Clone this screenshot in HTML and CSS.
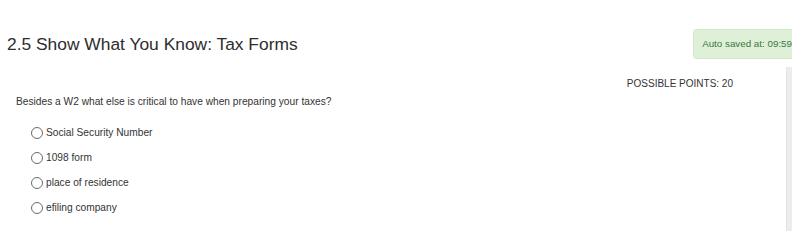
FILE: index.html
```html
<!DOCTYPE html>
<html lang="en">
<head>
  <meta charset="UTF-8">
  <title>2.5 Show What You Know: Tax Forms</title>
  <link rel="stylesheet" href="styles.css">
</head>
<body>
  <header class="quiz-header">
    <h1>2.5 Show What You Know: Tax Forms</h1>
    <div class="autosave">Auto saved at: 09:59</div>
  </header>

  <main class="quiz-body">
    <section class="question">
      <p class="points">POSSIBLE POINTS: 20</p>
      <p class="question-text">Besides a W2 what else is critical to have when preparing your taxes?</p>
      <ul class="answers">
        <li><label><span class="radio"></span>Social Security Number</label></li>
        <li><label><span class="radio"></span>1098 form</label></li>
        <li><label><span class="radio"></span>place of residence</label></li>
        <li><label><span class="radio"></span>efiling company</label></li>
      </ul>
    </section>
    <div class="side-rail"></div>
  </main>
</body>
</html>
```

FILE: styles.css
```css
/* Reset */
* {
  margin: 0;
  padding: 0;
  box-sizing: border-box;
}

html, body {
  overflow: hidden;
}

body {
  font-family: 'Liberation Sans', Arial, sans-serif;
  background: #fff;
  color: #333;
  width: 792px;
  height: 231px;
}

/* Header */
.quiz-header {
  display: flex;
  justify-content: space-between;
  align-items: flex-start;
  padding: 29px 0 0 7px;
  height: 67px;
}

.quiz-header h1 {
  font-size: 17.4px;
  font-weight: normal;
  color: #2d2d2d;
  line-height: 22px;
  margin-top: 4px;
}

.autosave {
  background: #dff0d8;
  color: #3c763d;
  border: 1px solid #d6e9c6;
  border-right: none;
  border-radius: 4px 0 0 4px;
  font-size: 9.8px;
  line-height: 12px;
  padding: 8px 0 8px 8px;
  height: 30px;
  white-space: nowrap;
}

/* Body */
.quiz-body {
  display: flex;
}

.question {
  flex: 1;
  padding-left: 16px;
}

.points {
  text-align: right;
  padding-right: 53px;
  font-size: 10px;
  line-height: 12px;
  color: #333;
  margin-top: 11px;
}

.question-text {
  font-size: 10.2px;
  line-height: 12px;
  color: #333;
  margin-top: 6px;
}

.answers {
  list-style: none;
  margin-top: 19px;
}

.answers li {
  height: 25px;
}

.answers label {
  display: flex;
  align-items: center;
  font-size: 10.2px;
  line-height: 12px;
  color: #333;
  padding-left: 15px;
}

.radio {
  width: 12px;
  height: 12px;
  border: 1px solid #6b6b6b;
  border-radius: 50%;
  margin-right: 3px;
  background: #fff;
}

.side-rail {
  width: 6px;
  height: 164px;
  background: #ededed;
  border-left: 1px solid #e4e4e4;
}
```
